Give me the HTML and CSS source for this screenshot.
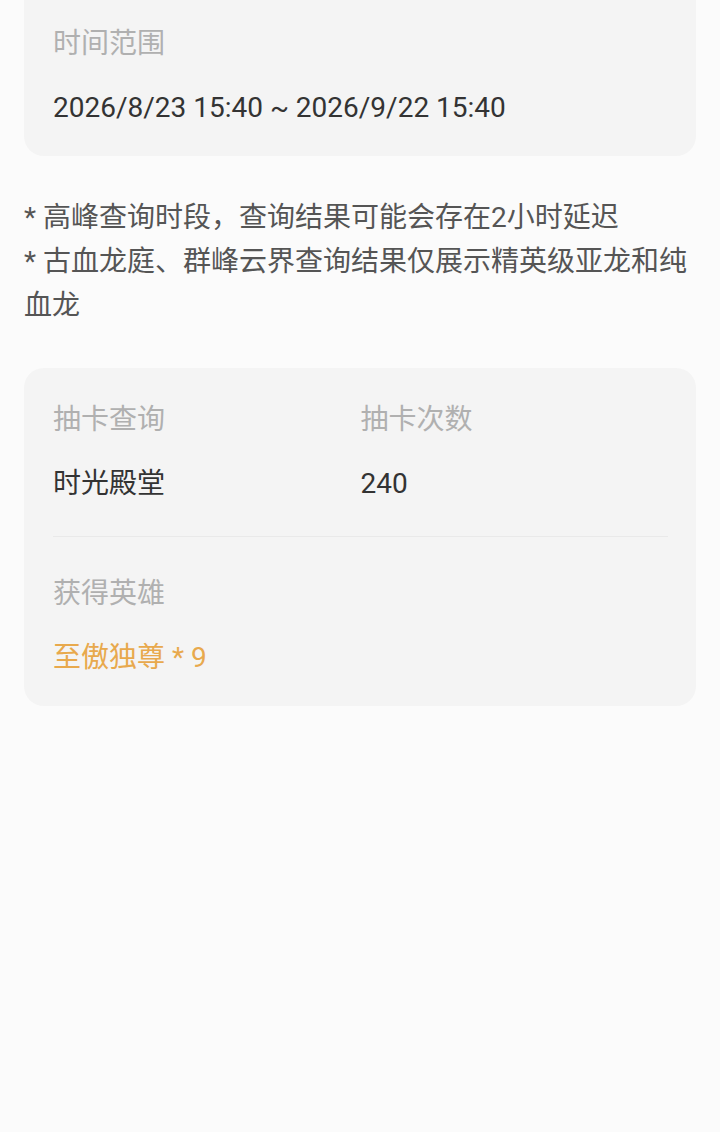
FILE: index.html
```html
<!DOCTYPE html>
<html lang="zh-CN">
<head>
<meta charset="utf-8">
<link rel="stylesheet" href="styles.css">
</head>
<body>
<div class="page">
  <section class="card card-top">
    <div class="field">
      <div class="label">时间范围</div>
      <div class="value">2026/8/23 15:40 ~ 2026/9/22 15:40</div>
    </div>
  </section>

  <div class="notes">
    <p>* 高峰查询时段，查询结果可能会存在2小时延迟</p>
    <p>* 古血龙庭、群峰云界查询结果仅展示精英级亚龙和纯血龙</p>
  </div>

  <section class="card">
    <div class="grid">
      <div class="field">
        <div class="label">抽卡查询</div>
        <div class="value">时光殿堂</div>
      </div>
      <div class="field">
        <div class="label">抽卡次数</div>
        <div class="value">240</div>
      </div>
    </div>
    <div class="divider"></div>
    <div class="field">
      <div class="label">获得英雄</div>
      <div class="value highlight">至傲独尊 * 9</div>
    </div>
  </section>
</div>
</body>
</html>
```

FILE: styles.css
```css
html, body {
  margin: 0;
  padding: 0;
  background: #fbfbfb;
}

body {
  font-family: Roboto, "Noto Sans CJK SC", sans-serif;
  color: #333333;
  width: 720px;
  height: 1132px;
  overflow: hidden;
}

.page {
  padding: 0 24px;
  display: flex;
  flex-direction: column;
}

.card {
  background: #f4f4f4;
  border-radius: 20px;
  padding: 32px 28px 28px 29px;
}

.card-top {
  border-radius: 0 0 20px 20px;
  padding-top: 24px;
}

.field {
  display: flex;
  flex-direction: column;
  gap: 24px;
}

.label {
  font-size: 28px;
  line-height: 40px;
  color: #b0b0b0;
}

.value {
  font-size: 28px;
  line-height: 40px;
  color: #333333;
}

.highlight {
  color: #e8a94d;
}

.notes {
  margin: 40px 0 40px;
  font-size: 28px;
  line-height: 44px;
  color: #555555;
}

.notes p {
  margin: 0;
}

.grid {
  display: grid;
  grid-template-columns: 1fr 1fr;
}

.divider {
  height: 1px;
  background: #e9e9e9;
  margin: 32px 0 37px;
}
```
